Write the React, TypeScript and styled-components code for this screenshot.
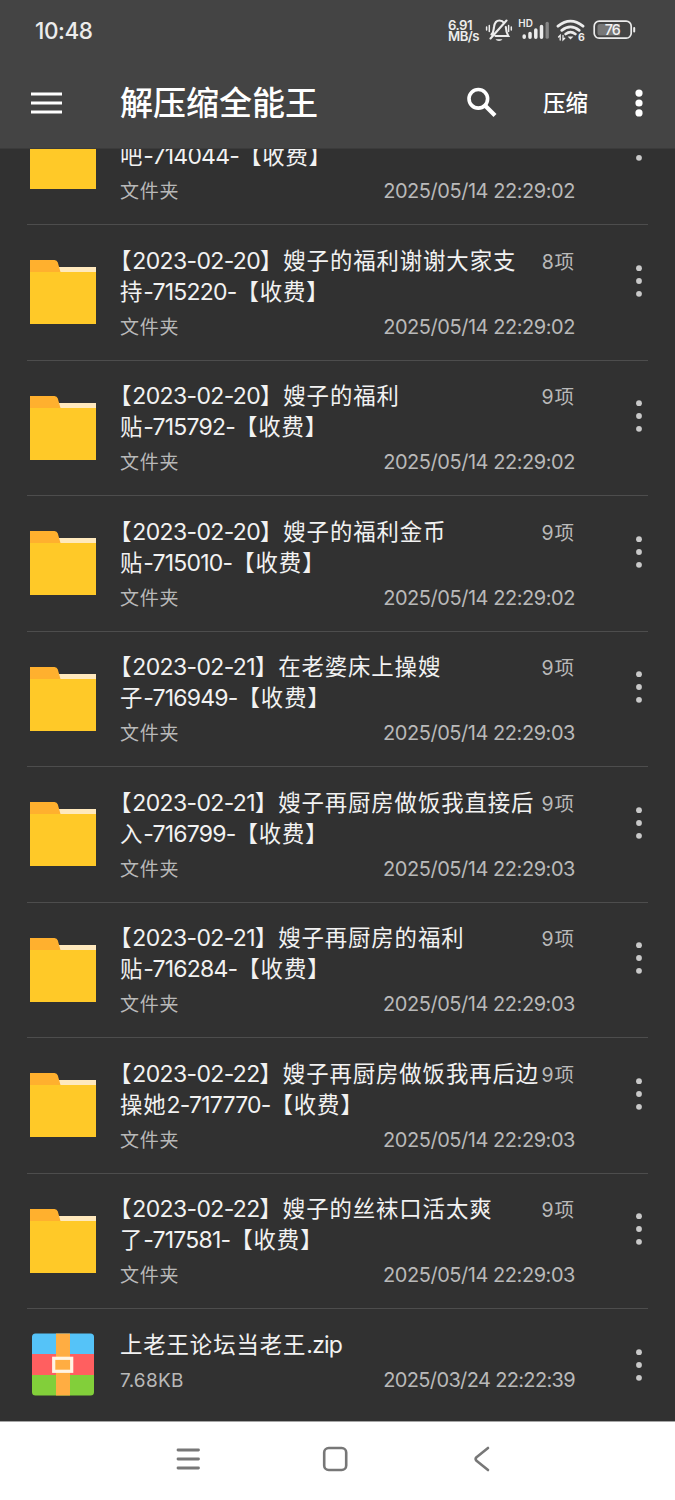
import React from 'react';
import styled, { createGlobalStyle } from 'styled-components';

const GlobalStyle = createGlobalStyle`
  * { box-sizing: border-box; }
  body {
    margin: 0;
    background: #313131;
    font-family: Inter, 'Noto Sans CJK SC', sans-serif;
  }
`;

const Screen = styled.div`
  width: 675px;
  height: 1500px;
  display: flex;
  flex-direction: column;
  overflow: hidden;
  background: #313131;
`;

const Header = styled.header`
  flex: none;
  height: 149px;
  background: #444444;
  border-bottom: 1px solid #3b3b3b;
  color: #fff;
`;

const StatusBar = styled.div`
  height: 60px;
  padding: 0 39px 0 35px;
  display: flex;
  align-items: center;
  justify-content: space-between;
`;

const Clock = styled.span`
  font-size: 22.5px;
  font-weight: 500;
  letter-spacing: -0.4px;
  color: #ececec;
`;

const StatusIcons = styled.div`
  display: flex;
  align-items: center;
`;

const Speed = styled.div`
  width: 32px;
  margin-right: 5px;
  padding-top: 1px;
  display: flex;
  flex-direction: column;
  font-size: 13.2px;
  line-height: 11px;
  font-weight: 600;
  letter-spacing: -0.5px;
  color: #ececec;
  white-space: nowrap;
`;

const Toolbar = styled.div`
  height: 86px;
  padding-left: 30px;
  display: flex;
  align-items: center;
`;

const AppTitle = styled.h1`
  margin: 0 0 0 57px;
  width: 346px;
  font-size: 33px;
  line-height: 48px;
  font-weight: 500;
`;

const CompressAction = styled.span`
  margin-left: 45px;
  width: 88.5px;
  font-size: 22.5px;
  line-height: 32px;
  font-weight: 500;
`;

const List = styled.main`
  flex: 1;
  min-height: 0;
  overflow: hidden;
  padding: 0 27px;
  display: flex;
  flex-direction: column;
  justify-content: flex-end;
`;

const Row = styled.article<{ $short?: boolean }>`
  flex: none;
  height: ${(p) => (p.$short ? 113 : 135.5)}px;
  border-top: 1px solid #4d4d4d;
  display: flex;
`;

const Thumb = styled.div<{ $top: number }>`
  width: 93px;
  padding: ${(p) => p.$top}px 0 0 3px;
  svg { display: block; }
`;

const Details = styled.div`
  width: 455px;
  padding-top: 19.5px;
`;

const NameRow = styled.div`
  height: 62px;
  display: flex;
  align-items: flex-end;
  justify-content: space-between;
`;

const Name = styled.div`
  color: #f2f2f2;
  font-size: 22.4px;
  line-height: 31px;
  letter-spacing: 0.9px;
  white-space: nowrap;
`;

const NameLine = styled.div<{ $hang?: boolean }>`
  height: 31px;
  margin-left: ${(p) => (p.$hang ? -11 : 0)}px;
`;

const Latin = styled.span<{ $date?: boolean }>`
  font-size: 23px;
  letter-spacing: ${(p) => (p.$date ? -0.65 : -0.8)}px;
`;

const Count = styled.span`
  align-self: flex-start;
  margin-left: -40px;
  color: #b9b9b9;
  font-size: 19.5px;
  line-height: 34px;
  letter-spacing: 0.9px;
  white-space: nowrap;
`;

const Meta = styled.div`
  margin-top: 5px;
  height: 31px;
  display: flex;
  justify-content: space-between;
  color: #b9b9b9;
  font-size: 19px;
  line-height: 31px;
`;

const Kind = styled.span<{ $latin?: boolean }>`
  letter-spacing: ${(p) => (p.$latin ? 0.25 : 0.8)}px;
`;

const Stamp = styled.time<{ $tight?: boolean }>`
  font-size: 20px;
  letter-spacing: ${(p) => (p.$tight ? -0.65 : -0.45)}px;
`;

const RowMenu = styled.div`
  width: 73px;
  padding: 35.5px 0 0 56.5px;
  svg { display: block; }
`;

const NavBar = styled.footer`
  flex: none;
  height: 79px;
  border-top: 1px solid #a5a5a5;
  background: #fff;
  padding: 0 171px 0 172px;
  display: flex;
  align-items: center;
  justify-content: space-between;
  svg { display: block; margin-top: -5px; }
`;

function FolderIcon() {
  return (
    <svg width="66" height="64" viewBox="0 0 66 64">
      <path d="M20 7H66V20H20Z" fill="#ffe9bd" />
      <path d="M0 0H24.500Q27 0 27.800 2.600L30.500 12V20H0Z" fill="#ffb02e" />
      <path d="M0 12H66V64H0Z" fill="#ffc928" />
    </svg>
  );
}

function ZipIcon() {
  return (
    <svg width="66" height="63" viewBox="0 0 66 63">
      <path d="M2 21V4Q2 .5 5.500 .5H60.500Q64 .5 64 4V21Z" fill="#55c3f8" />
      <path d="M2 21H64V42H2Z" fill="#ff5f60" />
      <path d="M2 42H64V59Q64 62.500 60.500 62.500H5.500Q2 62.500 2 59Z" fill="#82cf3a" />
      <path d="M26 .5H40V62.500H26Z" fill="#ffad42" />
      <rect x="23.700" y="25.300" width="18" height="13" fill="#ffad42" stroke="#fff4e4" strokeWidth="3.200" />
    </svg>
  );
}

function Dots({ gap = 12.8, r = 2.9, color = '#c9c9c9' }) {
  return (
    <svg width="14" height="40" viewBox="0 0 14 40" fill={color}>
      <circle cx="7" cy={20 - gap} r={r} />
      <circle cx="7" cy="20" r={r} />
      <circle cx="7" cy={20 + gap} r={r} />
    </svg>
  );
}

function StatusGlyphs() {
  return (
    <svg width="151" height="26" viewBox="485 17 151 26" fill="none" stroke="#ececec" strokeWidth="2.100" strokeLinecap="round">
      <path d="M491.500 34.500C494 32 493.500 29.500 494 27C494.600 22.500 497 20.500 499.500 20.500C501.500 20.500 503 21.300 504 22.800M505.800 27C506 30.500 506.500 33 508.300 36H495.500M490.500 38.500L506.500 20.500" />
      <path d="M495.500 39.200H502.500Q501.500 41 499 41Q496.500 41 495.500 39.200Z" fill="#ececec" stroke="none" />
      <path d="M489.300 25.500V31.500M486.600 27V30M508.600 25.500V31.500M511.300 27V30" strokeWidth="1.500" />
      <text x="518.300" y="27" fill="#ececec" stroke="none" fontSize="9.900" fontWeight="600" fontFamily="Inter, sans-serif">HD</text>
      <path d="M524.200 36V37.200M530 33.500V37.200M535.800 30V37.200M541.500 26.500V37.200" strokeWidth="3.500" />
      <path d="M547.200 23.500V37.200" stroke="#858585" strokeWidth="3.300" />
      <path d="M558 26.200Q570.500 16 583 26.200M561.800 30.300Q570.500 23.500 579.200 30.300M565.700 34Q570.500 30.300 575.300 34" strokeWidth="2.800" />
      <path d="M567.600 36.500H573.400L570.500 39.500Z" fill="#ececec" stroke="none" />
      <path d="M560.200 40V35.300L558.500 37M563 35.300V40L564.700 38.300" strokeWidth="1.300" />
      <text x="578" y="41" fill="#ececec" stroke="none" fontSize="10.500" fontWeight="700" fontFamily="Inter, sans-serif">6</text>
      <rect x="594.200" y="21.200" width="37" height="17" rx="5" strokeWidth="1.700" />
      <path d="M600 24H620V35.500H600Q597.500 35.500 597.500 33V26.500Q597.500 24 600 24Z" fill="#777" stroke="none" />
      <path d="M634.200 28V31.500" strokeWidth="2" />
      <text x="612.300" y="35" textAnchor="middle" fill="#f2f2f2" stroke="none" fontSize="14.300" fontWeight="500" letterSpacing="-1" fontFamily="Inter, sans-serif">76</text>
    </svg>
  );
}

type Folder = { date?: string; title?: string; lead: string; tail: string; items?: number; time: string };

// The first folder is scrolled half under the header, so only its last lines show.
const folders: Folder[] = [
  { lead: '吧', tail: '-714044-', time: '2025/05/14 22:29:02' },
  { date: '2023-02-20', title: '嫂子的福利谢谢大家支', lead: '持', tail: '-715220-', items: 8, time: '2025/05/14 22:29:02' },
  { date: '2023-02-20', title: '嫂子的福利', lead: '贴', tail: '-715792-', items: 9, time: '2025/05/14 22:29:02' },
  { date: '2023-02-20', title: '嫂子的福利金币', lead: '贴', tail: '-715010-', items: 9, time: '2025/05/14 22:29:02' },
  { date: '2023-02-21', title: '在老婆床上操嫂', lead: '子', tail: '-716949-', items: 9, time: '2025/05/14 22:29:03' },
  { date: '2023-02-21', title: '嫂子再厨房做饭我直接后', lead: '入', tail: '-716799-', items: 9, time: '2025/05/14 22:29:03' },
  { date: '2023-02-21', title: '嫂子再厨房的福利', lead: '贴', tail: '-716284-', items: 9, time: '2025/05/14 22:29:03' },
  { date: '2023-02-22', title: '嫂子再厨房做饭我再后边', lead: '操她', tail: '2-717770-', items: 9, time: '2025/05/14 22:29:03' },
  { date: '2023-02-22', title: '嫂子的丝袜口活太爽', lead: '了', tail: '-717581-', items: 9, time: '2025/05/14 22:29:03' },
];

function FolderRow({ folder }: { folder: Folder }) {
  return (
    <Row>
      <Thumb $top={35}><FolderIcon /></Thumb>
      <Details>
        <NameRow>
          <Name>
            {folder.date && <NameLine $hang>【<Latin $date>{folder.date}</Latin>】{folder.title}</NameLine>}
            <NameLine>{folder.lead}<Latin>{folder.tail}</Latin>【收费】</NameLine>
          </Name>
          {folder.items && <Count>{folder.items}项</Count>}
        </NameRow>
        <Meta><Kind>文件夹</Kind><Stamp>{folder.time}</Stamp></Meta>
      </Details>
      <RowMenu><Dots /></RowMenu>
    </Row>
  );
}

export default function App() {
  return (
    <Screen>
      <GlobalStyle />
      <Header>
        <StatusBar>
          <Clock>10:48</Clock>
          <StatusIcons>
            <Speed><span>6.91</span><span>MB/s</span></Speed>
            <StatusGlyphs />
          </StatusIcons>
        </StatusBar>
        <Toolbar>
          <svg width="33" height="24" viewBox="0 0 33 24" fill="#fff">
            <path d="M1 1.500H32V4.500H1ZM1 10.500H32V13.500H1ZM1 19.500H32V22.500H1Z" />
          </svg>
          <AppTitle>解压缩全能王</AppTitle>
          <svg width="32" height="32" viewBox="0 0 32 32" fill="none" stroke="#fff">
            <circle cx="12.300" cy="11.800" r="9.300" strokeWidth="3.600" />
            <path d="M19 18.500L29 28.500" strokeWidth="4.200" />
          </svg>
          <CompressAction>压缩</CompressAction>
          <Dots gap={9.9} r={3.6} color="#fff" />
        </Toolbar>
      </Header>
      <List>
        {folders.map((f) => <FolderRow key={f.tail} folder={f} />)}
        <Row $short>
          <Thumb $top={24}><ZipIcon /></Thumb>
          <Details>
            <Name><NameLine>上老王论坛当老王<Latin>.zip</Latin></NameLine></Name>
            <Meta><Kind $latin>7.68KB</Kind><Stamp $tight>2025/03/24 22:22:39</Stamp></Meta>
          </Details>
          <RowMenu><Dots /></RowMenu>
        </Row>
      </List>
      <NavBar>
        <svg width="32" height="32" viewBox="0 0 32 32" stroke="#777" strokeWidth="2.800" strokeLinecap="round">
          <path d="M6 7H26.500M6 16H26.500M6 25H26.500" />
        </svg>
        <svg width="32" height="32" viewBox="0 0 32 32" fill="none" stroke="#777" strokeWidth="2.600">
          <rect x="2.200" y="5" width="22" height="22" rx="4.500" />
        </svg>
        <svg width="32" height="32" viewBox="0 0 32 32" fill="none" stroke="#777" strokeWidth="2.600" strokeLinecap="round" strokeLinejoin="round">
          <path d="M16 5L4.500 14.200Q2.800 16 4.500 17.800L16 27" />
        </svg>
      </NavBar>
    </Screen>
  );
}
